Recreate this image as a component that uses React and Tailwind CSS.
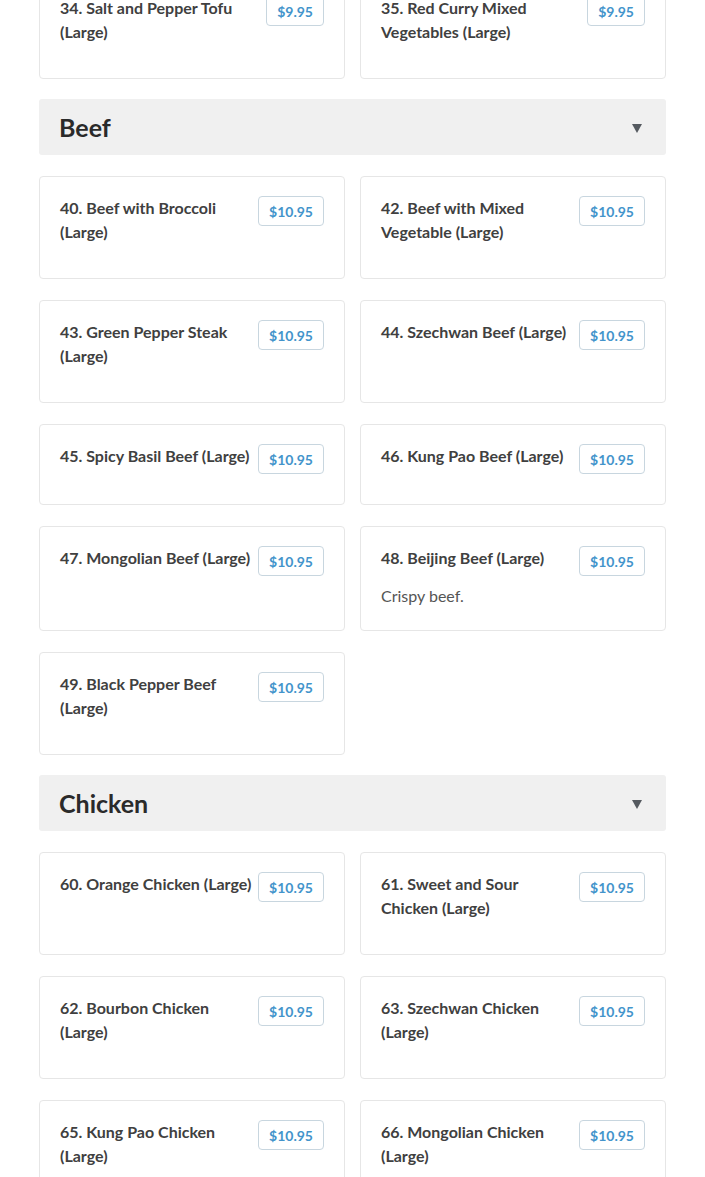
import React from "react";

const sections = [
  {
    title: null,
    items: [
      { name: "34. Salt and Pepper Tofu (Large)", price: "$9.95" },
      { name: "35. Red Curry Mixed Vegetables (Large)", price: "$9.95" },
    ],
  },
  {
    title: "Beef",
    items: [
      { name: "40. Beef with Broccoli (Large)", price: "$10.95" },
      { name: "42. Beef with Mixed Vegetable (Large)", price: "$10.95" },
      { name: "43. Green Pepper Steak (Large)", price: "$10.95" },
      { name: "44. Szechwan Beef (Large)", price: "$10.95" },
      { name: "45. Spicy Basil Beef (Large)", price: "$10.95" },
      { name: "46. Kung Pao Beef (Large)", price: "$10.95" },
      { name: "47. Mongolian Beef (Large)", price: "$10.95" },
      { name: "48. Beijing Beef (Large)", price: "$10.95", desc: "Crispy beef." },
      { name: "49. Black Pepper Beef (Large)", price: "$10.95" },
    ],
  },
  {
    title: "Chicken",
    items: [
      { name: "60. Orange Chicken (Large)", price: "$10.95" },
      { name: "61. Sweet and Sour Chicken (Large)", price: "$10.95" },
      { name: "62. Bourbon Chicken (Large)", price: "$10.95" },
      { name: "63. Szechwan Chicken (Large)", price: "$10.95" },
      { name: "65. Kung Pao Chicken (Large)", price: "$10.95" },
      { name: "66. Mongolian Chicken (Large)", price: "$10.95" },
    ],
  },
];

function Card({ item }) {
  return (
    <div className="border border-[#e6e6e6] rounded-[4px] bg-white px-5 pt-[19px] pb-[22px]">
      <div className="flex items-start gap-[5px]">
        <h4 className="flex-1 text-[16px] leading-6 font-bold text-[#404040] mb-3">
          {item.name}
        </h4>
        <span className="h-[30px] px-[10px] flex items-center border border-[#c8d6df] rounded-[4px] text-[14px] font-bold text-[#4394cb] mb-2 shrink-0">
          {item.price}
        </span>
      </div>
      {item.desc && (
        <p className="text-[16px] leading-6 text-[#555555]">{item.desc}</p>
      )}
    </div>
  );
}

function Header({ title }) {
  return (
    <div className="h-[56px] bg-[#f0f0f0] rounded-[3px] flex items-center justify-between pl-5 pr-6 mb-[21px]">
      <h3 className="text-[25px] font-bold text-[#2a2a2a] leading-8">{title}</h3>
      <svg width="10" height="9" viewBox="0 0 10 9" className="mt-[2px]">
        <polygon points="0,0 10,0 5,9" fill="#555a60" />
      </svg>
    </div>
  );
}

export default function App() {
  return (
    <div className="h-[1177px] overflow-hidden bg-white" style={{ fontFamily: "Lato, 'Noto Sans', sans-serif" }}>
      <div className="w-[627px] ml-[39px] mt-[-24px]">
        {sections.map((s, i) => (
          <div key={i} className="mb-[20px]">
            {s.title && <Header title={s.title} />}
            <div className="grid grid-cols-2 gap-x-[15px] gap-y-[21px]">
              {s.items.map((it) => (
                <Card key={it.name} item={it} />
              ))}
            </div>
          </div>
        ))}
      </div>
    </div>
  );
}
